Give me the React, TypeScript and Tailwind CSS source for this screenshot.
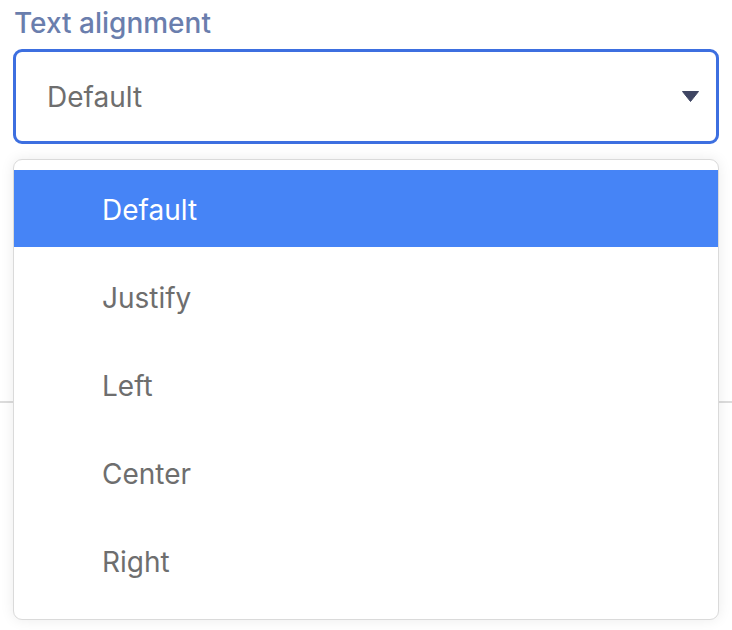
import React from 'react';

const options = ['Default', 'Justify', 'Left', 'Center', 'Right'];

export default function App() {
  return (
    <div className="relative w-[732px] h-[630px] bg-white overflow-hidden font-['Inter',sans-serif]">
      {/* underlying page line behind the menu */}
      <div className="absolute left-0 right-0 top-[401px] h-[2px] bg-[#dcdcdc]" />

      <div className="relative px-[13px] pt-[6px]">
        <label className="block pl-[1px] text-[28px] leading-[35px] font-medium text-[#6a7ead]">Text alignment</label>

        <div className="mt-[8px] h-[95px] rounded-[9px] border-[3px] border-[#3d6fe0] bg-white flex items-center justify-between pl-[31px] pr-[17px]">
          <span className="text-[28px] text-[#6e6e6e]">Default</span>
          <svg width="17" height="11" viewBox="0 0 17 11">
            <path d="M0.5 0.5 L16.5 0.5 L8.5 10.5 Z" fill="#3f4663" stroke="#3f4663" strokeLinejoin="round" />
          </svg>
        </div>

        <div className="mt-[15px] rounded-[9px] border border-[#dadada] bg-white py-[10px] shadow-[0_0_14px_rgba(0,0,0,0.08)] overflow-hidden">
          {options.map((o, i) => (
            <div
              key={o}
              className={`h-[77px] mb-[11px] last:mb-[10px] flex items-center pl-[88px] pt-[3px] text-[28px] ${
                i === 0 ? 'bg-[#4684f6] text-white' : 'text-[#6e6e6e]'
              }`}
            >
              {o}
            </div>
          ))}
        </div>
      </div>
    </div>
  );
}
